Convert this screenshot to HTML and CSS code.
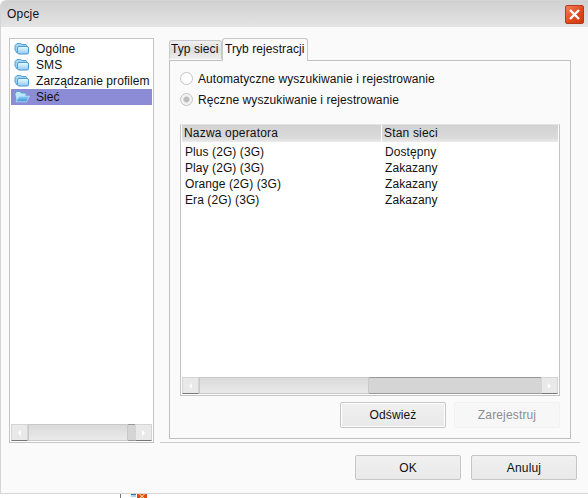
FILE: index.html
```html
<!DOCTYPE html>
<html lang="pl">
<head>
<meta charset="utf-8">
<title>Opcje</title>
<link rel="stylesheet" href="styles.css">
</head>
<body>
<svg width="0" height="0" class="defs">
  <defs>
    <linearGradient id="blue" x1="0" y1="0" x2="0" y2="1"><stop offset="0" stop-color="#eefafe"/><stop offset="1" stop-color="#8fcaf0"/></linearGradient>
    <linearGradient id="open" x1="0" y1="0" x2="0" y2="1"><stop offset="0" stop-color="#8fd0f5"/><stop offset="1" stop-color="#3a91d4"/></linearGradient>
    <symbol id="folder" viewBox="0 0 16 14">
      <path d="M3 11L1 8V3.500L3 1.500h3.500L8 2.500h4L13.500 4.500H5z" fill="#9fd3f1" stroke="#5a9fcd"/>
      <rect x="3.500" y="4.500" width="11" height="7.500" rx="1.500" fill="url(#blue)" stroke="#4f9bd0"/>
    </symbol>
    <symbol id="folder-open" viewBox="0 0 16 14">
      <path d="M2.500 11.500L.8 4l1.700-2.500H6L7.500 3H12v3" fill="#bfe5f9" stroke="#5aa3d6"/>
      <path d="M2 11.800L5 6.200h10.500L12.500 11.800z" fill="url(#open)" stroke="#b4e2fb" stroke-width=".8"/>
    </symbol>
  </defs>
</svg>
<main class="window">
  <header class="titlebar">
    <span class="title">Opcje</span>
    <button class="close" aria-label="Zamknij"><svg viewBox="0 0 17 17"><path d="M4 4l9 9M13 4l-9 9"/></svg></button>
  </header>
  <div class="content">
    <nav class="sidebar">
      <ul class="tree">
        <li><svg><use href="#folder"/></svg><span>Ogólne</span></li>
        <li><svg><use href="#folder"/></svg><span>SMS</span></li>
        <li><svg><use href="#folder"/></svg><span>Zarządzanie profilem</span></li>
        <li class="selected"><svg><use href="#folder-open"/></svg><span>Sieć</span></li>
      </ul>
      <div class="scrollbar"><i class="arrow left"></i><i class="track"></i><i class="thumb small"></i><i class="arrow right"></i></div>
    </nav>
    <section class="pane">
      <div class="tabs"><span class="tab">Typ sieci</span><span class="tab active">Tryb rejestracji</span></div>
      <div class="panel">
        <div class="radios">
          <div class="option"><i class="radio"></i><span>Automatyczne wyszukiwanie i rejestrowanie</span></div>
          <div class="option"><i class="radio checked"></i><span>Ręczne wyszukiwanie i rejestrowanie</span></div>
        </div>
        <div class="list">
          <div class="row head"><span>Nazwa operatora</span><span>Stan sieci</span></div>
          <div class="rows">
            <div class="row"><span>Plus (2G) (3G)</span><span>Dostępny</span></div>
            <div class="row"><span>Play (2G) (3G)</span><span>Zakazany</span></div>
            <div class="row"><span>Orange (2G) (3G)</span><span>Zakazany</span></div>
            <div class="row"><span>Era (2G) (3G)</span><span>Zakazany</span></div>
          </div>
          <div class="scrollbar"><i class="arrow left"></i><i class="track"></i><i class="thumb"></i><i class="arrow right"></i></div>
        </div>
        <div class="actions"><button class="btn focus">Odśwież</button><button class="btn" disabled>Zarejestruj</button></div>
      </div>
    </section>
  </div>
  <footer class="footer"><button class="btn">OK</button><button class="btn">Anuluj</button></footer>
</main>
<div class="behind"><i class="edge"></i><svg width="18" height="4"><path d="M0 0h5v3H0z" fill="#356e9e"/><path d="M0 1h5v2H0z" fill="#a8d4f0"/><path d="M6 0h10v4H6z" fill="#df4b16"/><path d="M8.500 0L11 2.500 13.500 0M9 4l2-1.500L13 4" stroke="#fff0b0" fill="none"/></svg></div>
</body>
</html>
```
FILE: styles.css
```css
* { box-sizing: border-box; }
body {
  margin: 0;
  width: 588px;
  height: 498px;
  overflow: hidden;
  background: #fff;
  color: #111;
  font: 12px/16px "Liberation Sans", Arial, sans-serif;
  letter-spacing: .08px;
  white-space: nowrap;
}
.defs { position: absolute; }
ul { margin: 0; padding: 0; list-style: none; }
.window {
  display: flex;
  flex-direction: column;
  height: 494px;
  background: #fafafa;
  border: 1px solid #d5d5d5;
  border-right: 0;
  border-radius: 6px 0 0 0;
}
.titlebar {
  display: flex;
  align-items: center;
  justify-content: space-between;
  height: 26px;
  padding: 0 4px 0 6px;
  background: linear-gradient(#d0d0d0, #e4e4e4);
  border-radius: 5px 0 0 0;
}
.title { letter-spacing: .2px; }
.close {
  width: 19px;
  height: 19px;
  padding: 0;
  border: 1px solid #b43a1c;
  border-radius: 2px;
  background: linear-gradient(135deg, #f0825c, #e3491b 55%, #cc3a10);
}
.close svg { display: block; width: 17px; height: 17px; }
.close path { stroke: #fff; stroke-width: 2.4; }
.content {
  display: flex;
  height: 416px;
  padding: 11px 0 0 8px;
}
.sidebar {
  display: flex;
  flex-direction: column;
  justify-content: space-between;
  width: 145px;
  height: 405px;
  padding: 2px 1px 1px;
  border: 1px solid #c4c4c4;
  background: #fff;
}
.tree li { display: flex; align-items: center; height: 16px; padding-left: 3px; }
.tree svg { width: 16px; height: 14px; margin-right: 6px; }
.tree li:nth-child(-n+3) svg { margin-bottom: 1px; }
.tree .selected { background: #8c8cd6; }
.pane {
  width: 420px;
  margin-left: 6px;
  padding-left: 9px;
  border-bottom: 1px solid #ccc;
}
.tabs { display: flex; align-items: flex-end; height: 22px; }
.tab {
  height: 19px;
  margin-bottom: 1px;
  padding-left: 1px;
  width: 53px;
  border: 1px solid #c8c8c8;
  border-bottom: 0;
  border-radius: 3px 3px 0 0;
  background: linear-gradient(#f0f0f0, #ddd 50%, #eee);
}
.tab.active {
  position: relative;
  width: 86px;
  height: 23px;
  margin-bottom: -1px;
  padding: 2px 0 0 2px;
  background: #fafafa;
}
.panel {
  width: 402px;
  height: 379px;
  border: 1px solid #c0c0c0;
  padding: 7px 10px 0;
}
.radios { height: 56px; }
.option { display: flex; align-items: center; height: 21px; }
.radio {
  width: 13px;
  height: 13px;
  margin-right: 5px;
  border: 1px solid #c4c4c4;
  border-radius: 50%;
  background: #fff;
}
.radio.checked { background: radial-gradient(circle, #bcbcbc 0 2.500px, #f2f2f2 3.500px); }
.list {
  display: flex;
  flex-direction: column;
  height: 272px;
  padding: 0 1px 1px;
  border: 1px solid #c4c4c4;
  border-top-color: #e4e4e4;
  background: #fff;
}
.row { display: grid; grid-template-columns: 200px 1fr; height: 16px; padding-left: 3px; }
.row.head {
  height: 17px;
  padding-left: 2px;
  letter-spacing: .18px;
  background: linear-gradient(#d2d2d2, #dadada 75%, #ebebeb);
}
.row.head span + span { margin-left: -3px; padding-left: 2px; border-left: 1px solid #fff; }
.rows { flex: 1; padding-top: 2px; }
.scrollbar { display: flex; height: 17px; }
.arrow {
  display: grid;
  place-items: center;
  width: 17px;
  border: 1px solid #d4d4d4;
  border-bottom-color: #777;
  background: #e9e9e9;
}
.arrow::after { content: ""; border: 3px solid transparent; }
.left::after { border-right-color: #fff; border-left: 0; }
.right::after { border-left-color: #fff; border-right: 0; }
.track {
  flex: 1;
  border: 1px solid #c9c9c9;
  background: linear-gradient(#dadada, #eaeaea);
}
.thumb {
  width: 172px;
  border: 1px solid #c6c6c6;
  border-width: 1px 0;
  border-top-color: #999;
  border-bottom-color: #999;
  background: #d6d5d5;
}
.thumb.small { width: 7px; }
.actions { display: flex; justify-content: flex-end; gap: 8px; padding-top: 6px; }
.btn {
  width: 106px;
  height: 26px;
  padding: 0;
  border: 1px solid #c6c6c6;
  border-radius: 2px;
  background: linear-gradient(#f0f0f0, #e9e9e9);
  font: inherit;
  letter-spacing: .15px;
  color: #111;
}
.btn.focus { box-shadow: inset 0 0 0 1px #fff; }
.btn:disabled { color: #8d8d8d; border-color: #f2f2f2; background: #f7f7f7; }
.footer { display: flex; justify-content: flex-end; gap: 10px; padding: 12px 11px 0 0; }
.footer .btn { height: 25px; }
.behind { display: flex; height: 4px; padding-left: 120px; }
.edge { width: 1px; margin-right: 10px; background: #777; }
```
